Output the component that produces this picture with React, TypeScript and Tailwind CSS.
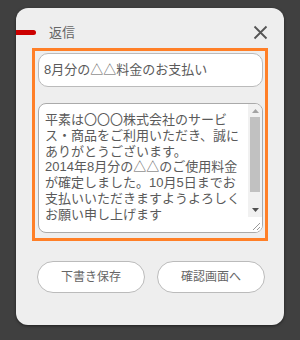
import React from "react";

const font = { fontFamily: '"Liberation Sans", "Noto Sans CJK JP", sans-serif' };

const lines = [
  "平素は〇〇〇株式会社のサービ",
  "ス・商品をご利用いただき、誠に",
  "ありがとうございます。",
  "2014年8月分の△△のご使用料金",
  "が確定しました。10月5日までお",
  "支払いいただきますようよろしく",
  "お願い申し上げます",
];

export default function App() {
  return (
    <div
      className="w-[300px] h-[340px] bg-[#404040] pt-[8px] pl-[16px] overflow-hidden"
      style={font}
    >
      <div className="w-[268px] h-[317px] rounded-[12px] bg-[#eeeeee] shadow-[0_1px_3px_rgba(0,0,0,0.5)] flex flex-col">
        {/* header */}
        <div className="h-[40px] pt-[8px] flex items-center">
          <div className="w-[20px] h-[5px] bg-[#cc0000] rounded-r-full" />
          <div className="ml-[13px] text-[13px] leading-none text-[#666666]">返信</div>
          <div className="ml-auto mr-[16px] w-[15px] h-[15px] flex items-center justify-center">
            <svg width="15" height="15" viewBox="0 0 15 15">
              <path d="M1.5 1.5 L13.5 13.5 M13.5 1.5 L1.5 13.5" stroke="#555555" strokeWidth="1.8" fill="none" />
            </svg>
          </div>
        </div>

        {/* orange box */}
        <div className="mx-[16px] border-[3px] border-[#ff7f27] pl-[3px] pr-[2px] pt-[2px] pb-[5px]">
          <div className="h-[34px] rounded-[10px] border border-[#bbbbbb] bg-white pl-[5px] flex items-center text-[13px] text-[#5a5a5a]">
            8月分の△△料金のお支払い
          </div>
          <div className="mt-[16px] h-[130px] rounded-[8px] border border-[#aaaaaa] bg-white flex overflow-hidden">
            <div className="flex-1 pl-[6px] pt-[8px] text-[13px] leading-[15.75px] text-[#5a5a5a] whitespace-nowrap overflow-hidden">
              {lines.map((l, i) => (
                <div key={i}>{l}</div>
              ))}
            </div>
            <div className="w-[14px] bg-[#f1f1f1] flex flex-col">
              <div className="h-[13px] flex items-center justify-center">
                <svg width="7" height="4" viewBox="0 0 7 4">
                  <path d="M0 4 L3.5 0 L7 4 Z" fill="#a3a3a3" />
                </svg>
              </div>
              <div className="h-[75px] mx-[2px] bg-[#c1c1c1]" />
              <div className="flex-1" />
              <div className="h-[14px] flex items-center justify-center">
                <svg width="7" height="4" viewBox="0 0 7 4">
                  <path d="M0 0 L7 0 L3.5 4 Z" fill="#505050" />
                </svg>
              </div>
              <div className="h-[15px] bg-white flex items-end justify-end pr-[1px] pb-[1px]">
                <svg width="9" height="9" viewBox="0 0 9 9">
                  <path d="M1 8 L8 1 M5 8 L8 5" stroke="#999999" strokeWidth="1" fill="none" />
                </svg>
              </div>
            </div>
          </div>
        </div>

        {/* buttons */}
        <div className="mt-[20px] pl-[21px] flex gap-[12px]">
          <div className="w-[108px] h-[32px] rounded-full border border-[#bbbbbb] bg-white flex items-center justify-center text-[12px] text-[#666666]">
            下書き保存
          </div>
          <div className="w-[108px] h-[32px] rounded-full border border-[#bbbbbb] bg-white flex items-center justify-center text-[12px] text-[#666666]">
            確認画面へ
          </div>
        </div>
      </div>
    </div>
  );
}
